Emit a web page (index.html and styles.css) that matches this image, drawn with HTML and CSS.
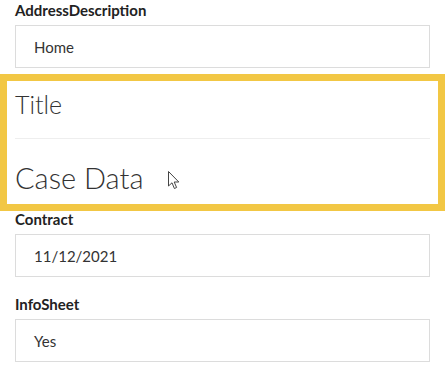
FILE: index.html
```html
<!DOCTYPE html>
<html>
<head>
<meta charset="utf-8">
<link rel="stylesheet" href="styles.css">
</head>
<body>
<div class="form">
  <div class="field">
    <div class="label">AddressDescription</div>
    <div class="input">Home</div>
  </div>
  <div class="frame">
    <div class="title">Title</div>
    <div class="divider"></div>
    <div class="heading">Case Data
      <svg class="cursor" width="15" height="21" viewBox="0 0 15 21">
        <path d="M1.5 1.5 L1.5 16 L5 12.8 L7.4 18.5 L9.6 17.5 L7.2 12 L11.8 12 Z" fill="#fff" stroke="#444" stroke-width="1" stroke-linejoin="round"/>
      </svg>
    </div>
  </div>
  <div class="field field-after">
    <div class="label">Contract</div>
    <div class="input">11/12/2021</div>
  </div>
  <div class="field">
    <div class="label">InfoSheet</div>
    <div class="input">Yes</div>
  </div>
</div>
</body>
</html>
```

FILE: styles.css
```css
html, body {
  margin: 0;
  padding: 0;
  background: #fff;
}
body {
  font-family: "Lato", "Liberation Sans", sans-serif;
  color: #222;
  width: 445px;
  height: 375px;
  overflow: hidden;
}
.form {
  display: flex;
  flex-direction: column;
}
.field {
  display: flex;
  flex-direction: column;
  padding: 0 15px;
  margin-bottom: 17px;
}
.field:first-child {
  margin-bottom: 6px;
}
.field-after {
  margin-top: -2px;
}
.label {
  font-size: 15px;
  font-weight: 700;
  line-height: 20px;
  height: 25px;
  color: #222;
}
.input {
  box-sizing: border-box;
  height: 43px;
  border: 1px solid #dcdcdc;
  padding: 0 18px;
  display: flex;
  align-items: center;
  font-size: 15px;
  color: #333;
}
.frame {
  box-sizing: border-box;
  height: 137px;
  border: 7px solid #f2c744;
  padding: 0 8px;
  display: flex;
  flex-direction: column;
}
.title {
  font-size: 25px;
  font-weight: 300;
  line-height: 30px;
  height: 57px;
  padding-top: 8px;
  box-sizing: border-box;
  color: #333;
}
.divider {
  height: 1px;
  background: #eeeeee;
}
.heading {
  font-size: 29px;
  font-weight: 300;
  line-height: 36px;
  padding-top: 21px;
  color: #333;
  display: flex;
  align-items: flex-start;
}
.cursor {
  margin-left: 24px;
  margin-top: 10px;
}
```
